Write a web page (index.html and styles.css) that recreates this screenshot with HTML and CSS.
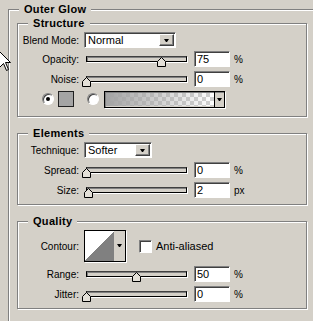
FILE: index.html
```html
<!DOCTYPE html>
<html>
<head>
<meta charset="utf-8">
<link rel="stylesheet" href="styles.css">
</head>
<body>
<fieldset class="group outer">
  <legend>Outer Glow</legend>

  <fieldset class="group sub structure">
    <legend>Structure</legend>
    <div class="rows">
      <div class="row first">
        <span class="lbl">Blend Mode:</span>
        <div class="select blend"><span class="val">Normal</span><span class="btn"><i class="arrow"></i></span></div>
      </div>
      <div class="row">
        <span class="lbl">Opacity:</span>
        <div class="slider"><div class="rail"><div class="track"></div><svg class="thumb" style="left:75%" width="9" height="10" viewBox="0 0 9 10"><path d="M4.5 0.5 L8.5 4.5 V9.5 H0.5 V4.5 Z" fill="#e4e0d8" stroke="#000"/></svg></div></div>
        <div class="num">75</div><span class="unit">%</span>
      </div>
      <div class="row">
        <span class="lbl">Noise:</span>
        <div class="slider"><div class="rail"><div class="track"></div><svg class="thumb" style="left:0%" width="9" height="10" viewBox="0 0 9 10"><path d="M4.5 0.5 L8.5 4.5 V9.5 H0.5 V4.5 Z" fill="#e4e0d8" stroke="#000"/></svg></div></div>
        <div class="num">0</div><span class="unit">%</span>
      </div>
      <div class="row colors">
        <span class="radio on"></span>
        <span class="swatch"></span>
        <span class="radio second"></span>
        <div class="gradbox"><span class="grad"></span><span class="gbtn"><i class="arrow"></i></span></div>
      </div>
    </div>
  </fieldset>

  <fieldset class="group sub elements">
    <legend>Elements</legend>
    <div class="rows">
      <div class="row">
        <span class="lbl">Technique:</span>
        <div class="select tech"><span class="val">Softer</span><span class="btn"><i class="arrow"></i></span></div>
      </div>
      <div class="row">
        <span class="lbl">Spread:</span>
        <div class="slider"><div class="rail"><div class="track"></div><svg class="thumb" style="left:0%" width="9" height="10" viewBox="0 0 9 10"><path d="M4.5 0.5 L8.5 4.5 V9.5 H0.5 V4.5 Z" fill="#e4e0d8" stroke="#000"/></svg></div></div>
        <div class="num">0</div><span class="unit">%</span>
      </div>
      <div class="row">
        <span class="lbl">Size:</span>
        <div class="slider"><div class="rail"><div class="track"></div><svg class="thumb" style="left:2%" width="9" height="10" viewBox="0 0 9 10"><path d="M4.5 0.5 L8.5 4.5 V9.5 H0.5 V4.5 Z" fill="#e4e0d8" stroke="#000"/></svg></div></div>
        <div class="num">2</div><span class="unit">px</span>
      </div>
    </div>
  </fieldset>

  <fieldset class="group sub quality">
    <legend>Quality</legend>
    <div class="rows">
      <div class="row contour-row">
        <span class="lbl">Contour:</span>
        <div class="contour"><span class="curve"></span><span class="cbtn"><i class="arrow"></i></span></div>
        <span class="check"></span><span class="check-lbl">Anti-aliased</span>
      </div>
      <div class="row">
        <span class="lbl">Range:</span>
        <div class="slider"><div class="rail"><div class="track"></div><svg class="thumb" style="left:50%" width="9" height="10" viewBox="0 0 9 10"><path d="M4.5 0.5 L8.5 4.5 V9.5 H0.5 V4.5 Z" fill="#e4e0d8" stroke="#000"/></svg></div></div>
        <div class="num">50</div><span class="unit">%</span>
      </div>
      <div class="row">
        <span class="lbl">Jitter:</span>
        <div class="slider"><div class="rail"><div class="track"></div><svg class="thumb" style="left:0%" width="9" height="10" viewBox="0 0 9 10"><path d="M4.5 0.5 L8.5 4.5 V9.5 H0.5 V4.5 Z" fill="#e4e0d8" stroke="#000"/></svg></div></div>
        <div class="num">0</div><span class="unit">%</span>
      </div>
    </div>
  </fieldset>
</fieldset>

<svg class="cursor" width="13" height="21" viewBox="0 0 13 21"><path d="M0.5 0.5 V16.5 L4.5 12.5 L7.5 19.5 L9.5 18.5 L6.5 11.5 H11.5 Z" fill="#fff" stroke="#000"/></svg>
</body>
</html>
```

FILE: styles.css
```css
* { box-sizing: border-box; }
html, body { margin: 0; height: 100%; overflow: hidden; }
body {
  background: #d4d0c8;
  font-family: "Liberation Sans", Arial, sans-serif;
  font-size: 10px;
  color: #000;
  position: relative;
}

.group {
  margin: 0;
  padding: 0;
  min-width: 0;
  border: 1px solid #808080;
  box-shadow: inset 1px 1px 0 #fff, 1px 1px 0 #fff;
}
.group > legend {
  font-weight: bold;
  font-size: 11px;
  line-height: 13px;
  letter-spacing: 0.3px;
  padding: 0 5px;
  background: #d4d0c8;
}

/* outer group continues past the window edge: only top and left edges show */
.outer {
  margin: 3px 0 0 8px;
  padding: 1px 0 0 8px;
  width: calc(100vw - 8px);
  height: calc(100vh - 3px);
  border-right: 0;
  border-bottom: 0;
  box-shadow: inset 1px 1px 0 #fff;
}
.outer > legend { margin-left: 2px; }

.sub { width: 290px; }
.sub > legend { margin-left: 10px; }
.structure { padding: 2px 0 9px 0; }
.elements { margin-top: 10px; padding: 2px 0 6px 0; }
.quality { margin-top: 10px; padding: 2px 0 6px 0; }

.rows { display: flex; flex-direction: column; gap: 4px; }
.row { display: flex; align-items: center; height: 16px; }
.row.first { margin-bottom: -1px; }

.lbl {
  width: 61px;
  margin-right: 5px;
  text-align: right;
  white-space: nowrap;
}

/* dropdown select */
.select {
  display: flex;
  align-items: center;
  height: 16px;
  background: #fff;
  border: 1px solid;
  border-color: #808080 #fff #fff #808080;
  box-shadow: inset 1px 1px 0 #404040;
  padding: 1px 1px 1px 3px;
}
.select .val { flex: 1; font-size: 11px; line-height: 12px; }
.blend { width: 92px; }
.tech { width: 68px; }
.btn {
  width: 15px;
  height: 12px;
  background: #d4d0c8;
  border: 1px solid;
  border-color: #fff #404040 #404040 #fff;
  box-shadow: inset -1px -1px 0 #808080;
  display: flex;
  align-items: center;
  justify-content: center;
}
.arrow {
  display: block;
  width: 1px;
  height: 0;
  border-top: 3px solid #000;
  border-left: 2px solid transparent;
  border-right: 2px solid transparent;
  box-sizing: content-box;
}

/* slider */
.slider {
  width: 108px;
  height: 16px;
  padding: 0 4px;
  margin-left: -2px;
}
.rail { position: relative; width: 100px; height: 16px; }
.track {
  position: absolute;
  left: 0;
  right: -1px;
  top: 5px;
  height: 6px;
  background: #d4d0c8;
  border: 1px solid #000;
  border-top-color: #404040;
  box-shadow: inset 1px 1px 0 #808080, 1px 1px 0 #fff;
}
.thumb {
  position: absolute;
  top: 6px;
  margin-left: -4px;
  display: block;
}

/* numeric field */
.num {
  width: 36px;
  height: 16px;
  margin-left: 4px;
  background: #fff;
  border: 1px solid;
  border-color: #808080 #fff #fff #808080;
  box-shadow: inset 1px 1px 0 #404040;
  padding-left: 2px;
  font-size: 11px;
  line-height: 14px;
}
.unit { margin-left: 4px; font-size: 10px; }

/* color row */
.colors { padding-left: 24px; }
.radio {
  width: 12px;
  height: 12px;
  border-radius: 50%;
  background: #fff;
  border: 1px solid;
  border-color: #808080 #fff #fff #808080;
  box-shadow: inset 1px 1px 0 #404040;
  display: flex;
  align-items: center;
  justify-content: center;
}
.radio.on::after {
  content: "";
  width: 4px;
  height: 4px;
  border-radius: 50%;
  background: #000;
}
.radio.second { margin-left: 13px; }
.swatch {
  width: 16px;
  height: 16px;
  margin-left: 4px;
  background: #a4a4a4;
  border: 1px solid #202020;
}
.gradbox {
  display: flex;
  width: 121px;
  height: 17px;
  margin-left: 5px;
  border: 1px solid #000;
  box-shadow: inset 1px 1px 0 #808080, 1px 1px 0 #fff;
  background: #d4d0c8;
}
.grad {
  flex: 1;
  margin: 1px 0 1px 1px;
  background:
    linear-gradient(to right, rgba(164,164,164,1), rgba(164,164,164,0)),
    conic-gradient(#d0d0d0 90deg, #fff 90deg 180deg, #d0d0d0 180deg 270deg, #fff 270deg) 0 0 / 8px 8px;
}
.gbtn {
  width: 10px;
  border-left: 1px solid #000;
  display: flex;
  align-items: center;
  justify-content: center;
}

/* contour */
.contour-row { height: 32px; }
.contour {
  display: flex;
  width: 42px;
  height: 32px;
  border: 1px solid #000;
  box-shadow: 1px 1px 0 #fff;
  background: #d4d0c8;
}
.curve {
  width: 29px;
  height: 30px;
  background: linear-gradient(to bottom right, #fff 50%, #808080 50%);
}
.cbtn {
  flex: 1;
  display: flex;
  align-items: center;
  justify-content: center;
  padding-bottom: 2px;
}
.check {
  width: 13px;
  height: 13px;
  margin-left: 13px;
  background: #fff;
  border: 1px solid;
  border-color: #808080 #fff #fff #808080;
  box-shadow: inset 1px 1px 0 #404040;
}
.check-lbl { margin-left: 4px; font-size: 11px; }

.cursor {
  position: absolute;
  left: -1px;
  top: 51px;
}
```
